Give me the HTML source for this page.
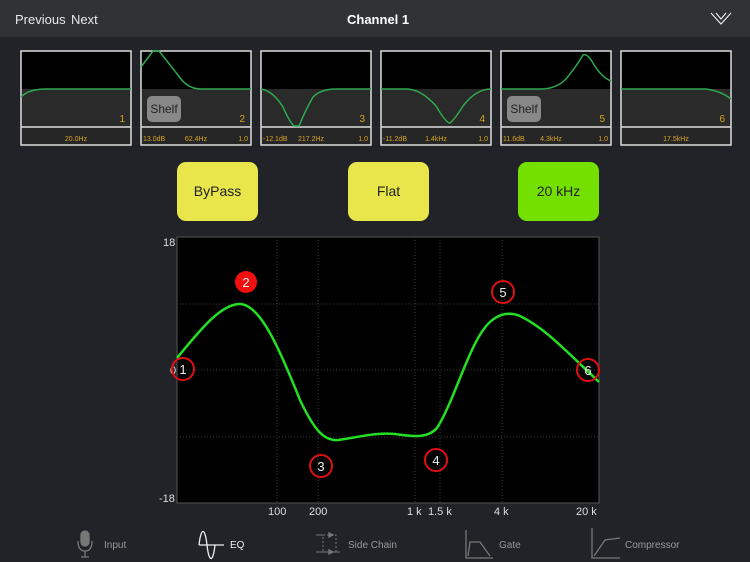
<!DOCTYPE html>
<html><head><meta charset="utf-8"><style>
body{margin:0;width:750px;height:562px;background:#212329;overflow:hidden;font-family:"Liberation Sans",sans-serif;position:relative}
.hdr{position:absolute;left:0;top:0;width:750px;height:37px;background:#303236;color:#e8e8e8;font-size:13px}
.btn{position:absolute;top:162px;width:81px;height:59px;border-radius:9px;background:#e8e64a;color:#222;font-size:14px;text-align:center;line-height:59px}
</style></head><body>
<div class="hdr">
<span style="position:absolute;left:15px;top:12px">Previous</span>
<span style="position:absolute;left:71px;top:12px">Next</span>
<span style="position:absolute;left:347px;top:12px;font-weight:bold;color:#fff">Channel 1</span>
<svg style="position:absolute;left:709px;top:11px" width="24" height="16"><path d="M2 2L12 13L22 2M7 2L12 8L17 2" stroke="#eee" stroke-width="1.1" fill="none"/></svg>
</div>
<svg width="750" height="562" style="position:absolute;left:0;top:0" font-family="Liberation Sans">
<defs>
<g id="th"><rect x="0" y="0" width="110" height="38" fill="#000"/><rect x="0" y="38" width="110" height="38" fill="#2a2a2a"/><rect x="0" y="76" width="110" height="18" fill="#262626"/><line x1="0" y1="76" x2="110" y2="76" stroke="#ddd" stroke-width="1.5"/><rect x="0" y="0" width="110" height="94" fill="none" stroke="#ddd" stroke-width="1.5"/></g>
</defs>
<g transform="translate(21,51)"><use href="#th"/><path d="M0 46Q8 38 25 38L110 38" stroke="#2fa84f" stroke-width="1.5" fill="none"/><text x="104" y="71" fill="#d9a520" font-size="10" text-anchor="end">1</text><text x="55" y="90" fill="#d9a520" font-size="7" text-anchor="middle">20.0Hz</text></g>
<g transform="translate(141,51)"><use href="#th"/><path d="M0 16L12 0L18 0Q30 15 40 28Q48 38 60 38L110 38" stroke="#2fa84f" stroke-width="1.5" fill="none"/><rect x="6" y="45" width="34" height="26" rx="5" fill="#888"/><text x="23" y="62" fill="#222" font-size="12" text-anchor="middle">Shelf</text><text x="104" y="71" fill="#d9a520" font-size="10" text-anchor="end">2</text><text x="2" y="90" fill="#d9a520" font-size="7">13.0dB</text><text x="55" y="90" fill="#d9a520" font-size="7" text-anchor="middle">62.4Hz</text><text x="107" y="90" fill="#d9a520" font-size="7" text-anchor="end">1.0</text></g>
<g transform="translate(261,51)"><use href="#th"/><path d="M0 38Q12 40 22 56Q28 70 33 75L38 75Q44 60 52 46Q60 38 75 38L110 38" stroke="#2fa84f" stroke-width="1.5" fill="none"/><text x="104" y="71" fill="#d9a520" font-size="10" text-anchor="end">3</text><text x="2" y="90" fill="#d9a520" font-size="7">-12.1dB</text><text x="50" y="90" fill="#d9a520" font-size="7" text-anchor="middle">217.2Hz</text><text x="107" y="90" fill="#d9a520" font-size="7" text-anchor="end">1.0</text></g>
<g transform="translate(381,51)"><use href="#th"/><path d="M0 38L25 38Q40 38 55 55Q65 72 69 72Q74 68 82 55Q95 38 110 38" stroke="#2fa84f" stroke-width="1.5" fill="none"/><text x="104" y="71" fill="#d9a520" font-size="10" text-anchor="end">4</text><text x="2" y="90" fill="#d9a520" font-size="7">-11.2dB</text><text x="55" y="90" fill="#d9a520" font-size="7" text-anchor="middle">1.4kHz</text><text x="107" y="90" fill="#d9a520" font-size="7" text-anchor="end">1.0</text></g>
<g transform="translate(501,51)"><use href="#th"/><path d="M0 38L40 38Q55 38 65 28Q75 16 82 4Q86 2 92 12Q100 26 110 30" stroke="#2fa84f" stroke-width="1.5" fill="none"/><rect x="6" y="45" width="34" height="26" rx="5" fill="#888"/><text x="23" y="62" fill="#222" font-size="12" text-anchor="middle">Shelf</text><text x="104" y="71" fill="#d9a520" font-size="10" text-anchor="end">5</text><text x="2" y="90" fill="#d9a520" font-size="7">11.6dB</text><text x="50" y="90" fill="#d9a520" font-size="7" text-anchor="middle">4.3kHz</text><text x="107" y="90" fill="#d9a520" font-size="7" text-anchor="end">1.0</text></g>
<g transform="translate(621,51)"><use href="#th"/><path d="M0 38L85 38Q100 40 110 48" stroke="#2fa84f" stroke-width="1.5" fill="none"/><text x="104" y="71" fill="#d9a520" font-size="10" text-anchor="end">6</text><text x="55" y="90" fill="#d9a520" font-size="7" text-anchor="middle">17.5kHz</text></g>

<rect x="177" y="237" width="422" height="266" fill="#000" stroke="#555"/>
<g stroke="#3a3a3a" stroke-dasharray="1,2" stroke-width="1">
<line x1="177" y1="304" x2="599" y2="304"/><line x1="177" y1="370" x2="599" y2="370"/><line x1="177" y1="437" x2="599" y2="437"/>
<line x1="277" y1="237" x2="277" y2="503"/><line x1="318" y1="237" x2="318" y2="503"/><line x1="415" y1="237" x2="415" y2="503"/><line x1="440" y1="237" x2="440" y2="503"/><line x1="502" y1="237" x2="502" y2="503"/>
</g>
<g fill="#ddd" font-size="11">
<text x="163" y="246">18</text><text x="170" y="374">0</text><text x="159" y="502">-18</text>
<text x="268" y="515">100</text><text x="309" y="515">200</text><text x="407" y="515">1 k</text><text x="428" y="515">1.5 k</text><text x="494" y="515">4 k</text><text x="576" y="515">20 k</text>
</g>
<path d="M177 358C200 330 220 305 239 304C260 303 280 350 300 400C315 432 325 441 338 440C355 438 375 432 395 434C415 437 428 438 437 428C455 400 470 340 490 322C500 313 510 312 520 316C545 328 565 350 599 382" stroke="#22e022" stroke-width="2.5" fill="none"/>
<g fill="none" stroke="#e01010" stroke-width="2">
<circle cx="183" cy="369" r="11"/><circle cx="321" cy="466" r="11"/><circle cx="436" cy="460" r="11"/><circle cx="503" cy="292" r="11"/><circle cx="588" cy="370" r="11"/>
</g>
<circle cx="246" cy="282" r="11" fill="#f01010"/>
<g fill="#eee" font-size="13" text-anchor="middle">
<text x="183" y="374">1</text><text x="246" y="287">2</text><text x="321" y="471">3</text><text x="436" y="465">4</text><text x="503" y="297">5</text><text x="588" y="375">6</text>
</g>

<g stroke="#777" fill="none" stroke-width="1.3">
<rect x="81" y="531" width="8" height="15" rx="4" fill="#777"/><path d="M78 541Q78 551 85 551Q92 551 92 541M85 551V557M81 557H89"/>
<path d="M323 535H336V552H323Z" stroke-dasharray="2,2" stroke-width="1"/><path d="M316 535H323M316 552H340" stroke-width="1"/><path d="M329 533L333 535L329 537ZM329 550L333 552L329 554Z" fill="#777"/>
<path d="M466 530V558H493M468 556L470 542L480 542L490 556"/>
<path d="M592 528V558H620M594 556L605 540L620 538"/>
</g>
<path d="M199 545C201 527 205 527 207 545C209 563 213 563 215 545M199 545H224" stroke="#eee" stroke-width="1.3" fill="none"/>
<g font-size="10" fill="#999"><text x="104" y="548">Input</text><text x="230" y="548" fill="#eee">EQ</text><text x="348" y="548">Side Chain</text><text x="499" y="548">Gate</text><text x="625" y="548">Compressor</text></g>
</svg>
<div class="btn" style="left:177px">ByPass</div>
<div class="btn" style="left:348px">Flat</div>
<div class="btn" style="left:518px;background:#74e000">20 kHz</div>
</body></html>
